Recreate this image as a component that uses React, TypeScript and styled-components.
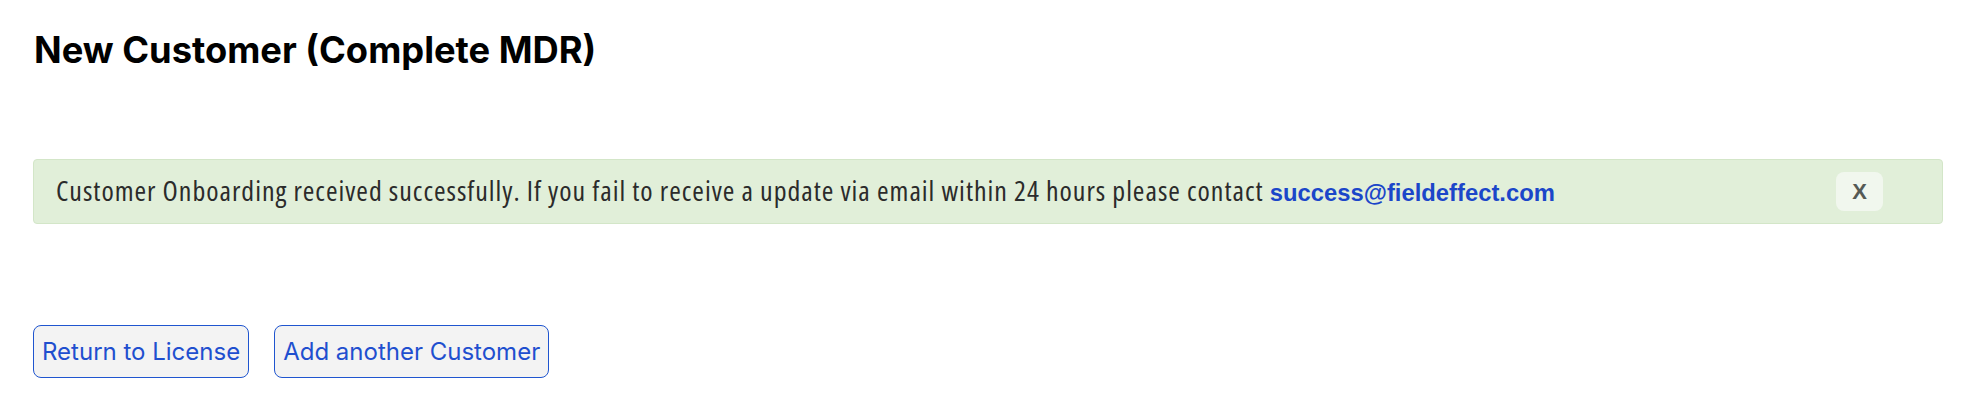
import * as React from 'react'
import styled, { createGlobalStyle } from 'styled-components'

const GlobalStyle = createGlobalStyle`
  html, body {
    margin: 0;
    padding: 0;
    background: #fff;
  }
`

export default function App(): JSX.Element {
  return (
    <Page>
      <GlobalStyle />
      <Title>New Customer (Complete MDR)</Title>

      <Alert role="alert">
        <AlertText>
          Customer Onboarding received successfully. If you fail to receive a
          update via email within 24 hours please contact{' '}
          <Email href="#">success@fieldeffect.com</Email>
        </AlertText>
        <CloseButton type="button" aria-label="Close">
          X
        </CloseButton>
      </Alert>

      <Actions>
        <ActionButton type="button">Return to License</ActionButton>
        <ActionButton type="button">Add another Customer</ActionButton>
      </Actions>
    </Page>
  )
}

// styles
const Page = styled.div`
  padding: 0 32px 0 33px;
`

const Title = styled.h1`
  margin: 30px 0 0;
  padding-left: 1px;
  font-family: Inter, Roboto, 'Liberation Sans', sans-serif;
  font-size: 36.3px;
  line-height: 40px;
  font-weight: 700;
  color: #000;
`

const Alert = styled.div`
  margin-top: 89px;
  height: 65px;
  box-sizing: border-box;
  display: flex;
  align-items: center;
  justify-content: space-between;
  padding: 0 59px 0 22px;
  background: #e1efd9;
  border: 1px solid #d3e6c8;
  border-radius: 4px;
`

const AlertText = styled.p`
  margin: 0;
  font-family: 'Open Sans', 'Noto Sans', sans-serif;
  font-stretch: 75%;
  font-size: 28px;
  letter-spacing: 0.97px;
  line-height: 32px;
  color: #2b2b2b;
`

const Email = styled.a`
  font-family: 'Liberation Sans', Arial, sans-serif;
  font-stretch: 100%;
  font-size: 23.8px;
  letter-spacing: 0;
  font-weight: 700;
  color: #1b46c9;
  text-decoration: none;
`

const CloseButton = styled.button`
  width: 47px;
  height: 39px;
  padding: 0;
  border: none;
  border-radius: 8px;
  background: #f1f7ee;
  font-family: 'Liberation Sans', Arial, sans-serif;
  font-size: 22px;
  font-weight: 700;
  color: #555a55;
  cursor: pointer;
`

const Actions = styled.div`
  display: flex;
  gap: 25px;
  margin-top: 101px;
`

const ActionButton = styled.button`
  height: 53px;
  padding: 0 8px;
  box-sizing: border-box;
  border: 1px solid #1f55cf;
  border-radius: 8px;
  background: #f3f3f3;
  font-family: Inter, 'Noto Sans', sans-serif;
  font-size: 24px;
  color: #1f4fcf;
  cursor: pointer;
`
